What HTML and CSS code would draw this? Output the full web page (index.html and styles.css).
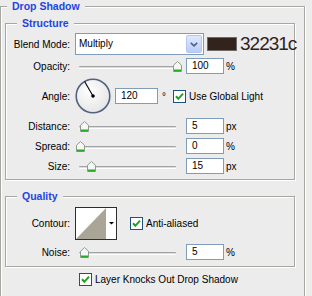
FILE: index.html
```html
<!DOCTYPE html>
<html lang="en">
<head>
    <meta charset="UTF-8">
    <title>Drop Shadow</title>
    <link rel="stylesheet" href="styles.css">
</head>
<body>
    <fieldset class="group outer">
        <legend>Drop Shadow</legend>

        <fieldset class="group section structure">
            <legend>Structure</legend>

            <div class="row blend-row">
                <label class="lbl">Blend Mode:</label>
                <div class="select">
                    <span class="select-text">Multiply</span>
                    <span class="select-btn">
                        <svg width="8" height="5" viewBox="0 0 8 5"><path d="M0.8 0.8L4 3.8L7.2 0.8" fill="none" stroke="#4d6185" stroke-width="1.6"/></svg>
                    </span>
                </div>
                <span class="swatch"></span>
                <span class="hex">32231c</span>
            </div>

            <div class="row opacity-row">
                <label class="lbl">Opacity:</label>
                <div class="slider">
                    <span class="track"></span>
                    <span class="thumb" style="left: 97px"><svg width="9" height="11" viewBox="0 0 9 11"><path d="M4.5 0.5L8.5 4.2V10.5H0.5V4.2Z" fill="#f6f6f6" stroke="#8e9a8e"/><rect x="1" y="8.5" width="7" height="2" fill="#22b022"/></svg></span>
                </div>
                <span class="field">100</span>
                <span class="unit">%</span>
            </div>

            <div class="row angle-row">
                <label class="lbl">Angle:</label>
                <svg class="dial" width="36" height="36" viewBox="0 0 36 36">
                    <defs>
                        <radialGradient id="dialfill" cx="0.4" cy="0.35" r="0.75">
                            <stop offset="0" stop-color="#ffffff"/>
                            <stop offset="1" stop-color="#e2e2e2"/>
                        </radialGradient>
                    </defs>
                    <circle cx="18" cy="18" r="16.8" fill="url(#dialfill)" stroke="#52627f" stroke-width="1.6"/>
                    <path d="M18 18L9.6 3.4" stroke="#000" stroke-width="1.1"/>
                    <circle cx="18" cy="18" r="1.8" fill="#000"/>
                </svg>
                <span class="field angle-field">120</span>
                <span class="deg">°</span>
                <span class="check global-check">
                    <svg width="13" height="13" viewBox="0 0 13 13"><rect x="0.5" y="0.5" width="12" height="12" fill="#fff" stroke="#1c5180"/><path d="M3 6.3L5.3 8.8L10 3.6" fill="none" stroke="#21a121" stroke-width="2"/></svg>
                    <span>Use Global Light</span>
                </span>
            </div>

            <div class="row">
                <label class="lbl">Distance:</label>
                <div class="slider">
                    <span class="track"></span>
                    <span class="thumb" style="left: 4px"><svg width="9" height="11" viewBox="0 0 9 11"><path d="M4.5 0.5L8.5 4.2V10.5H0.5V4.2Z" fill="#f6f6f6" stroke="#8e9a8e"/><rect x="1" y="8.5" width="7" height="2" fill="#22b022"/></svg></span>
                </div>
                <span class="field">5</span>
                <span class="unit">px</span>
            </div>

            <div class="row">
                <label class="lbl">Spread:</label>
                <div class="slider">
                    <span class="track"></span>
                    <span class="thumb" style="left: 0px"><svg width="9" height="11" viewBox="0 0 9 11"><path d="M4.5 0.5L8.5 4.2V10.5H0.5V4.2Z" fill="#f6f6f6" stroke="#8e9a8e"/><rect x="1" y="8.5" width="7" height="2" fill="#22b022"/></svg></span>
                </div>
                <span class="field">0</span>
                <span class="unit">%</span>
            </div>

            <div class="row">
                <label class="lbl">Size:</label>
                <div class="slider">
                    <span class="track"></span>
                    <span class="thumb" style="left: 11px"><svg width="9" height="11" viewBox="0 0 9 11"><path d="M4.5 0.5L8.5 4.2V10.5H0.5V4.2Z" fill="#f6f6f6" stroke="#8e9a8e"/><rect x="1" y="8.5" width="7" height="2" fill="#22b022"/></svg></span>
                </div>
                <span class="field">15</span>
                <span class="unit">px</span>
            </div>
        </fieldset>

        <fieldset class="group section quality">
            <legend>Quality</legend>

            <div class="row contour-row">
                <label class="lbl">Contour:</label>
                <svg class="contour" width="42" height="33" viewBox="0 0 42 33">
                    <rect x="0.5" y="0.5" width="41" height="32" fill="#fff" stroke="#2e2e2e"/>
                    <path d="M1 32L31 1V32Z" fill="#aaa697"/>
                    <path d="M34 15H39L36.5 17.6Z" fill="#000"/>
                </svg>
                <span class="check aa-check">
                    <svg width="13" height="13" viewBox="0 0 13 13"><rect x="0.5" y="0.5" width="12" height="12" fill="#fff" stroke="#1c5180"/><path d="M3 6.3L5.3 8.8L10 3.6" fill="none" stroke="#21a121" stroke-width="2"/></svg>
                    <span>Anti-aliased</span>
                </span>
            </div>

            <div class="row">
                <label class="lbl">Noise:</label>
                <div class="slider">
                    <span class="track"></span>
                    <span class="thumb" style="left: 4px"><svg width="9" height="11" viewBox="0 0 9 11"><path d="M4.5 0.5L8.5 4.2V10.5H0.5V4.2Z" fill="#f6f6f6" stroke="#8e9a8e"/><rect x="1" y="8.5" width="7" height="2" fill="#22b022"/></svg></span>
                </div>
                <span class="field">5</span>
                <span class="unit">%</span>
            </div>
        </fieldset>

        <span class="check knock-check">
            <svg width="13" height="13" viewBox="0 0 13 13"><rect x="0.5" y="0.5" width="12" height="12" fill="#fff" stroke="#1c5180"/><path d="M3 6.3L5.3 8.8L10 3.6" fill="none" stroke="#21a121" stroke-width="2"/></svg>
            <span>Layer Knocks Out Drop Shadow</span>
        </span>
    </fieldset>
</body>
</html>
```

FILE: styles.css
```css
html,
body {
    margin: 0;
    overflow: hidden;
}

body {
    width: 312px;
    height: 296px;
    background-color: #ececec;
    font-family: "Liberation Sans", Arial, sans-serif;
    font-size: 10px;
    color: #000;
}

/* etched group boxes */
.group {
    margin: 0;
    padding: 0;
    min-width: 0;
    box-sizing: border-box;
    border: 1px solid #a7a6a0;
    box-shadow: inset 1px 1px 0 #fff, 1px 1px 0 #fff;
}

.group > legend {
    padding: 0 5px;
    line-height: 13px;
    font-size: 10.5px;
    font-weight: bold;
    color: #1f45e0;
    background-color: #ececec;
}

.outer {
    width: 305px;
    padding-bottom: 10px;
    border-bottom: none;
    box-shadow: inset 1px 1px 0 #fff, 1px 0 0 #fff;
}

.outer > legend {
    margin-left: 6px;
}

.section {
    width: 290px;
    margin: 4px 0 0 4px;
}

.section > legend {
    margin-left: 11px;
}

.structure {
    padding: 3px 0 5px;
}

.quality {
    margin-top: 10px;
    padding: 4px 0 6px;
}

/* rows */
.row {
    display: flex;
    align-items: center;
    margin-top: 4px;
    white-space: nowrap;
}

.blend-row {
    height: 22px;
    margin-top: 0;
}

.opacity-row {
    margin-top: 3px;
}

.contour-row {
    margin-top: 0;
}

.lbl {
    flex: none;
    width: 64px;
    text-align: right;
}

/* blend mode */
.select {
    flex: none;
    display: flex;
    width: 129px;
    height: 22px;
    margin-left: 5px;
    box-sizing: border-box;
    border: 1px solid #7f9db9;
    background-color: #fff;
}

.select-text {
    flex: 1;
    padding-left: 3px;
    line-height: 20px;
}

.select-btn {
    display: flex;
    align-items: center;
    justify-content: center;
    width: 16px;
    margin: 1px;
    box-sizing: border-box;
    border: 1px solid #b4c6f2;
    border-radius: 2px;
    background: linear-gradient(#dfe9fe, #b9ccf8);
}

.select-btn svg {
    display: block;
}

.swatch {
    flex: none;
    width: 30px;
    height: 14px;
    margin-left: 3px;
    box-sizing: border-box;
    border: 1px solid #6f6a68;
    background-color: #32231c;
}

.hex {
    margin-left: 3px;
    font-size: 19px;
    line-height: 22px;
    letter-spacing: -1px;
    color: #32231c;
}

/* sliders */
.slider {
    flex: none;
    position: relative;
    width: 106px;
    height: 11px;
    margin-left: 6px;
}

.track {
    display: block;
    height: 1px;
    margin: 5px 6px 0 3px;
    border-top: 1px solid #a3a3a3;
    border-bottom: 1px solid #fff;
    border-radius: 1px;
    background-color: #dcdcdc;
}

.thumb {
    position: absolute;
    top: 0;
    width: 9px;
    height: 11px;
}

.thumb svg {
    display: block;
}

.field {
    flex: none;
    display: block;
    width: 38px;
    height: 16px;
    margin-left: 4px;
    padding-left: 5px;
    box-sizing: border-box;
    border: 1px solid #7f9db9;
    background-color: #fff;
    line-height: 14px;
}

.unit {
    margin-left: 2px;
}

/* angle */
.dial {
    flex: none;
    display: block;
    margin-left: 5px;
}

.angle-field {
    width: 43px;
}

.deg {
    margin-left: 4px;
}

.check {
    display: flex;
    align-items: center;
    white-space: nowrap;
}

.check svg {
    display: block;
    flex: none;
}

.check span {
    margin-left: 3px;
}

.global-check {
    margin-left: 7px;
}

/* quality */
.contour {
    flex: none;
    display: block;
    margin-left: 5px;
}

.aa-check {
    margin-left: 13px;
}

.knock-check {
    margin: 6px 0 0 78px;
}
```
